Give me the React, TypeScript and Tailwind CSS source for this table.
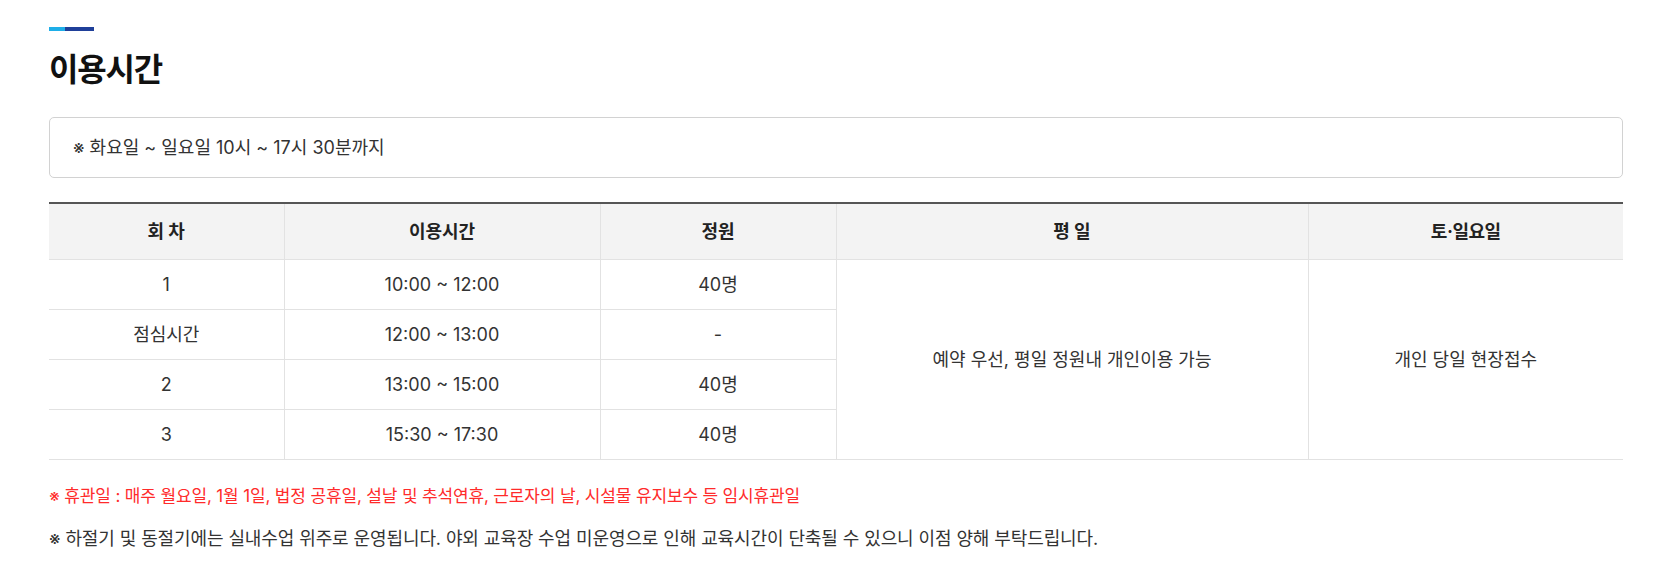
const rows = [
  { no: "1", time: "10:00 ~ 12:00", cap: "40명" },
  { no: "점심시간", time: "12:00 ~ 13:00", cap: "-" },
  { no: "2", time: "13:00 ~ 15:00", cap: "40명" },
  { no: "3", time: "15:30 ~ 17:30", cap: "40명" },
];

export default function App() {
  return (
    <div
      className="w-[1670px] h-[588px] bg-white pl-[49px] pr-[47px] pt-[27px] text-[#333]"
      style={{ fontFamily: 'Inter, "Noto Sans CJK KR", "Noto Sans", sans-serif' }}
    >
      {/* section title */}
      <div className="flex h-[4px] w-[45px]">
        <span className="w-[16px] bg-[#1eaee8]" />
        <span className="flex-1 bg-[#1f3f99]" />
      </div>
      <h2 className="mt-[17px] text-[32px] font-bold leading-[44px] tracking-[-1.2px] text-[#111]">이용시간</h2>

      <div className="mt-[25px] flex h-[61px] items-center rounded-[5px] border border-[#d2d2d2] px-[23px] text-[18px] text-[#333]">
        ※ 화요일 ~ 일요일 10시 ~ 17시 30분까지
      </div>

      <table className="mt-[24px] w-full table-fixed border-collapse border-t-2 border-[#555] text-center text-[18px]">
        <colgroup>
          <col className="w-[235px]" />
          <col className="w-[316px]" />
          <col className="w-[236px]" />
          <col className="w-[472px]" />
          <col />
        </colgroup>
        <thead>
          <tr className="h-[56px] bg-[#f3f3f3] font-bold text-[#222]">
            <th className="border-b border-[#e2e2e2]">회 차</th>
            <th className="border-b border-l border-[#e2e2e2]">이용시간</th>
            <th className="border-b border-l border-[#e2e2e2]">정원</th>
            <th className="border-b border-l border-[#e2e2e2]">평 일</th>
            <th className="border-b border-l border-[#e2e2e2] tracking-[-0.5px]">토·일요일</th>
          </tr>
        </thead>
        <tbody>
          {rows.map((r, i) => (
            <tr key={r.no} className="h-[50px]">
              <td className="border-b border-[#e2e2e2]">{r.no}</td>
              <td className="border-b border-l border-[#e2e2e2]">{r.time}</td>
              <td className="border-b border-l border-[#e2e2e2]">{r.cap}</td>
              {i === 0 && (
                <>
                  <td rowSpan={4} className="border-b border-l border-[#e2e2e2]">
                    예약 우선, 평일 정원내 개인이용 가능
                  </td>
                  <td rowSpan={4} className="border-b border-l border-[#e2e2e2]">
                    개인 당일 현장접수
                  </td>
                </>
              )}
            </tr>
          ))}
        </tbody>
      </table>

      <p className="mt-[23px] text-[17px] leading-[26px] tracking-[-0.15px] text-[#ff2b2b]">
        ※ 휴관일 : 매주 월요일, 1월 1일, 법정 공휴일, 설날 및 추석연휴, 근로자의 날, 시설물 유지보수 등 임시휴관일
      </p>
      <p className="mt-[17px] text-[18px] leading-[26px] tracking-[-0.1px] text-[#333]">
        ※ 하절기 및 동절기에는 실내수업 위주로 운영됩니다. 야외 교육장 수업 미운영으로 인해 교육시간이 단축될 수 있으니 이점 양해 부탁드립니다.
      </p>
    </div>
  );
}
